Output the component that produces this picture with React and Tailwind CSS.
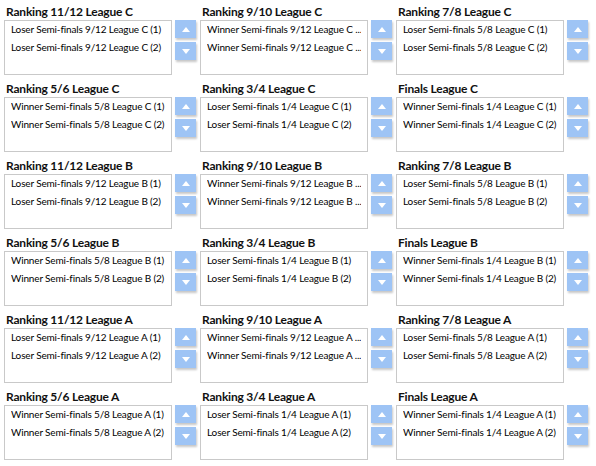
import React from 'react'

const leagues = ['C', 'B', 'A']

const buildRows = (l) => [
  [
    { title: `Ranking 11/12 League ${l}`, items: [`Loser Semi-finals 9/12 League ${l} (1)`, `Loser Semi-finals 9/12 League ${l} (2)`] },
    { title: `Ranking 9/10 League ${l}`, items: [`Winner Semi-finals 9/12 League ${l} ...`, `Winner Semi-finals 9/12 League ${l} ...`] },
    { title: `Ranking 7/8 League ${l}`, items: [`Loser Semi-finals 5/8 League ${l} (1)`, `Loser Semi-finals 5/8 League ${l} (2)`] },
  ],
  [
    { title: `Ranking 5/6 League ${l}`, items: [`Winner Semi-finals 5/8 League ${l} (1)`, `Winner Semi-finals 5/8 League ${l} (2)`] },
    { title: `Ranking 3/4 League ${l}`, items: [`Loser Semi-finals 1/4 League ${l} (1)`, `Loser Semi-finals 1/4 League ${l} (2)`] },
    { title: `Finals League ${l}`, items: [`Winner Semi-finals 1/4 League ${l} (1)`, `Winner Semi-finals 1/4 League ${l} (2)`] },
  ],
]

const Arrow = ({ up }) => (
  <svg width="8" height="5" viewBox="0 0 8 5">
    <polygon points={up ? '0,5 8,5 4,0' : '0,0 8,0 4,5'} fill="#ffffff" />
  </svg>
)

const MoveButton = ({ up }) => (
  <button className="w-[21px] h-[18px] flex items-center justify-center bg-[#9ec4f5] shadow-[1px_2px_2px_rgba(0,0,0,0.22)]">
    <Arrow up={up} />
  </button>
)

const RankingBox = ({ title, items }) => (
  <div className="w-[196px] h-[77px] flex flex-col">
    <div className="h-[20px] pl-[2px] pt-[3px] text-[12px] leading-[17px] font-bold tracking-[-0.2px] text-[#111] whitespace-nowrap">
      {title}
    </div>
    <div className="flex gap-[3px]">
      <div className="w-[168px] h-[55px] border border-[#c9c9c9] bg-white px-[6px]">
        {items.map((item, i) => (
          <div key={i} className="h-[17.5px] leading-[17.5px] text-[10px] tracking-[-0.15px] text-black whitespace-nowrap overflow-hidden">
            {item}
          </div>
        ))}
      </div>
      <div className="flex flex-col gap-[4px]">
        <MoveButton up />
        <MoveButton />
      </div>
    </div>
  </div>
)

export default function App() {
  return (
    <div className="w-[596px] h-[466px] bg-white pl-[4px] overflow-hidden font-['Lato',sans-serif]">
      {leagues.flatMap((l) => buildRows(l)).map((row, r) => (
        <div key={r} className="flex">
          {row.map((box, c) => (
            <RankingBox key={c} {...box} />
          ))}
        </div>
      ))}
    </div>
  )
}
